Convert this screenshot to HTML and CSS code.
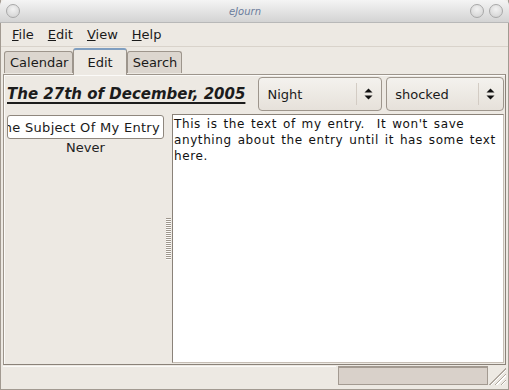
FILE: index.html
```html
<!DOCTYPE html>
<html lang="en">
<head>
    <meta charset="UTF-8">
    <title>eJourn</title>
    <link rel="stylesheet" href="styles.css">
</head>
<body>
    <div class="window">
        <div class="titlebar">
            <span class="btn"></span>
            <span class="title">eJourn</span>
            <span class="btn"></span>
            <span class="btn"></span>
        </div>
        <div class="menubar">
            <span class="menu"><u>F</u>ile</span>
            <span class="menu"><u>E</u>dit</span>
            <span class="menu"><u>V</u>iew</span>
            <span class="menu"><u>H</u>elp</span>
        </div>
        <div class="notebook">
            <div class="tabs">
                <div class="tab">Calendar</div>
                <div class="tab active">Edit</div>
                <div class="tab">Search</div>
            </div>
            <div class="page">
                <div class="header">
                    <div class="date">The 27th of December, 2005</div>
                    <div class="combo night">
                        <span class="value">Night</span>
                        <span class="arrows"><svg width="9" height="12" viewBox="0 0 9 12"><path d="M4.5 0.5 L8.5 4.5 H0.5 Z M0.5 7.5 H8.5 L4.5 11.5 Z" fill="#111"/></svg></span>
                    </div>
                    <div class="combo mood">
                        <span class="value">shocked</span>
                        <span class="arrows"><svg width="9" height="12" viewBox="0 0 9 12"><path d="M4.5 0.5 L8.5 4.5 H0.5 Z M0.5 7.5 H8.5 L4.5 11.5 Z" fill="#111"/></svg></span>
                    </div>
                </div>
                <div class="panes">
                    <div class="side">
                        <div class="entry"><span>The Subject Of My Entry</span></div>
                        <div class="never">Never</div>
                    </div>
                    <div class="handle"></div>
                    <div class="textview">This is the text of my entry.&nbsp; It won't save anything about the entry until it has some text here.</div>
                </div>
            </div>
        </div>
        <div class="statusbar">
            <div class="status-text"></div>
            <div class="progress"></div>
            <div class="grip"></div>
        </div>
    </div>
</body>
</html>
```

FILE: styles.css
```css
body {
    margin: 0;
    font-family: "DejaVu Sans", sans-serif;
    font-size: 13px;
    color: #1a1a1a;
    background: #ede9e3;
}
.window {
    width: 509px;
    height: 390px;
    box-sizing: border-box;
    border: 1px solid #a29a91;
    border-top: none;
    display: flex;
    flex-direction: column;
    background: #ede9e3;
}
.titlebar {
    height: 23px;
    flex-shrink: 0;
    box-sizing: border-box;
    display: flex;
    align-items: center;
    padding: 0 6px 0 6px;
    gap: 5px;
    background: linear-gradient(#f4f4f4, #d3d3d3);
    border-bottom: 1px solid #b8b8b8;
    border-radius: 5px 5px 0 0;
    margin: 0 -1px;
}
.btn {
    width: 14px;
    height: 14px;
    box-sizing: border-box;
    border-radius: 50%;
    border: 1px solid #a8a8a8;
    background: radial-gradient(circle at 50% 35%, #f2f2f2, #cfcfcf);
}
.title {
    flex: 1;
    text-align: center;
    font-style: italic;
    font-size: 10px;
    color: #6b7c9c;
}
.menubar {
    height: 24px;
    flex-shrink: 0;
    box-sizing: border-box;
    display: flex;
    align-items: center;
    padding: 0 0 0 11px;
    gap: 14px;
    border-bottom: 1px solid #d9d3cb;
}
.menu u {
    text-underline-offset: 1px;
}
.notebook {
    flex: 1;
    display: flex;
    flex-direction: column;
    padding: 0 2px 0 2px;
}
.tabs {
    display: flex;
    height: 27px;
    padding-left: 1px;
    align-items: flex-end;
}
.tab {
    height: 22px;
    box-sizing: border-box;
    padding: 3px 4px 0 5px;
    background: #dcd6cf;
    border: 1px solid #9d958c;
    border-bottom: none;
    border-radius: 3px 3px 0 0;
    margin-bottom: 1px;
}
.tab.active {
    height: 27px;
    padding: 5px 13px 0 13px;
    background: #ede9e3;
    border-color: #9d958c;
    border-top: 2px solid #7f9ec0;
    margin-bottom: -1px;
    position: relative;
    z-index: 1;
}
.page {
    flex: 1;
    display: flex;
    flex-direction: column;
    border: 1px solid #9d958c;
    border-right-color: #8a8279;
    border-bottom-color: #8a8279;
    box-shadow: inset 1px 1px 0 #fbfaf8;
    padding: 2px 1px 1px 0;
}
.header {
    display: flex;
    align-items: center;
    height: 34px;
}
.date {
    width: 252px;
    padding-left: 3px;
    font-size: 15px;
    font-weight: bold;
    font-style: italic;
    text-decoration: underline;
    text-decoration-thickness: 2px;
    text-underline-offset: 3px;
    color: #1c1c1c;
}
.combo {
    height: 34px;
    box-sizing: border-box;
    border: 1px solid #9d958c;
    border-radius: 4px;
    background: linear-gradient(#f4f2ee, #e6e1da);
    display: flex;
    align-items: center;
    padding-left: 8px;
    font-size: 13px;
}
.combo .value {
    flex: 1;
}
.combo.night {
    width: 124px;
}
.combo.mood {
    width: 118px;
    margin-left: 4px;
}
.arrows {
    width: 22px;
    height: 22px;
    border-left: 1px solid #d3ccc4;
    display: flex;
    align-items: center;
    justify-content: center;
    margin-right: 2px;
}
.panes {
    flex: 1;
    display: flex;
    margin-top: 3px;
}
.side {
    width: 157px;
    margin-left: 3px;
    display: flex;
    flex-direction: column;
    align-items: center;
    padding-top: 1px;
}
.entry {
    width: 157px;
    height: 24px;
    flex-shrink: 0;
    box-sizing: border-box;
    border: 1px solid #8f877e;
    border-radius: 3px;
    background: #fff;
    overflow: hidden;
    display: flex;
    justify-content: flex-end;
    align-items: center;
    padding-right: 3px;
    white-space: nowrap;
    letter-spacing: 0.3px;
}
.never {
    margin-top: 1px;
    color: #222;
}
.handle {
    width: 5px;
    align-self: center;
    height: 42px;
    margin: 0 1px 0 2px;
    background: repeating-linear-gradient(#9e968c 0 1px, #fbfaf8 1px 2px);
}
.textview {
    flex: 1;
    background: #fff;
    border: 1px solid #8a8279;
    border-right-color: #c6beb5;
    border-bottom-color: #c6beb5;
    padding: 1px 1px;
    font-size: 12px;
    line-height: 16px;
    letter-spacing: 0.6px;
    word-spacing: 1.5px;
    color: #111;
}
.statusbar {
    height: 24px;
    flex-shrink: 0;
    box-sizing: border-box;
    display: flex;
    align-items: stretch;
    padding: 1px 2px 4px 0;
}
.status-text {
    flex: 1;
    border-top: 1px solid #fbfaf8;
    margin: 0 2px;
}
.progress {
    width: 150px;
    box-sizing: border-box;
    background: #d9d1ca;
    border: 1px solid #a39a91;
    border-top: 2px solid #a39a91;
}
.grip {
    width: 18px;
    background: repeating-linear-gradient(135deg, transparent 0 2px, #b0a89f 2px 3px, #fff 3px 4px);
    clip-path: polygon(100% 0, 100% 100%, 0 100%);
}
```
